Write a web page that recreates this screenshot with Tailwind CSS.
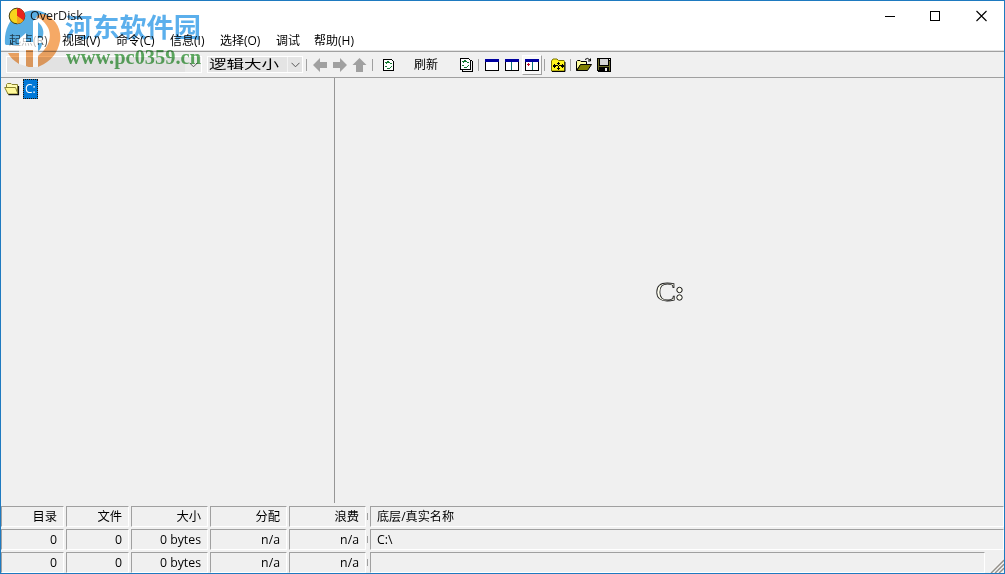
<!DOCTYPE html>
<html lang="zh-CN">
<head>
<meta charset="utf-8">
<title>OverDisk</title>
<script src="https://cdn.jsdelivr.net/npm/@tailwindcss/browser@4"></script>
</head>
<body class="w-[1005px] h-[574px] overflow-hidden">
<div class="relative flex flex-col w-[1005px] h-[574px] border border-[#1e7ac0] bg-[#f0f0f0] text-black text-[12px] leading-4 font-['Open_Sans','Noto_Sans_CJK_SC',sans-serif] whitespace-nowrap overflow-hidden">

  <!-- title bar -->
  <header class="flex h-[29px] shrink-0 bg-white items-center pl-[7px]">
    <svg class="relative z-10 w-[18px] h-[18px] shrink-0" viewBox="0 0 18 18"><circle cx="9" cy="9" r="7.8" fill="#f7d51c" stroke="#4a4010"/><path d="M9 9V1.2A7.8 7.8 0 0 1 15.4 13.5Z" fill="#e8231c"/><path d="M9 9L15.4 13.5A7.8 7.8 0 0 1 9 16.8Z" fill="#f5a51c"/></svg>
    <span class="ml-1 w-[60px] text-[12.5px] text-[#222]">OverDisk</span>
    <div class="ml-auto flex mr-[16px] gap-[34px] items-center">
      <svg class="w-[12px] h-[12px]" viewBox="0 0 12 12" shape-rendering="crispEdges"><path d="M1 6.5H11" stroke="#000"/></svg>
      <svg class="w-[12px] h-[12px]" viewBox="0 0 12 12" shape-rendering="crispEdges"><path d="M.5 1.5H9.5V10.5H.5Z" fill="none" stroke="#000"/></svg>
      <svg class="w-[12px] h-[12px]" viewBox="0 0 12 12"><path d="M.5 1L10.500 11M10.500 1L.5 11" stroke="#000" stroke-width="1.1"/></svg>
    </div>
  </header>

  <!-- menu -->
  <nav class="flex h-[21px] shrink-0 bg-white items-center pl-2 pt-px border-b border-[#e3e3e3]">
    <span class="w-[53px] text-[#555]">起点(R)</span><span class="w-[54px]">视图(V)</span><span class="w-[54px]">命令(C)</span><span class="w-[50px]">信息(I)</span><span class="w-[56px]">选择(O)</span><span class="w-[38px]">调试</span><span>帮助(H)</span>
  </nav>

  <!-- toolbar -->
  <div class="flex h-[27px] shrink-0 items-center border-y border-[#a0a0a0] pl-[5px]">
    <div class="flex h-[17px] w-[196px] bg-[#e2e2e2] border border-white justify-end items-center">
      <div class="h-full w-[16px] bg-[#eaeaea] flex items-center justify-center"><svg class="w-[9px] h-[6px]" viewBox="0 0 9 6"><path d="M.5 .8L4.5 4.8L8.5 .8" fill="none" stroke="#555"/></svg></div>
    </div>
    <div class="ml-[5px] flex h-[17px] w-[96px] bg-[#e4e4e4] border border-white items-center">
      <div class="w-[79px] pl-px"><span class="inline-block origin-left scale-x-[1.46]">逻辑大小</span></div>
      <div class="h-full w-[15px] bg-[#e4e4e4] border-l border-[#f3f3f3] flex items-center justify-center"><svg class="w-[9px] h-[6px]" viewBox="0 0 9 6"><path d="M.5 .8L4.5 4.8L8.5 .8" fill="none" stroke="#555"/></svg></div>
    </div>
    <i class="ml-[3px] h-[12px] w-px bg-[#a0a0a0]"></i>
    <svg class="ml-[6px] w-[54px] h-[14px] shrink-0" viewBox="0 0 54 14" fill="#a0a0a0"><path d="M0 7L7 0V4H14V10H7V14ZM34 7L27 0V4H20V10H27V14ZM46.500 0L53.500 7H50V14H43V7H39.500Z"/></svg>
    <i class="ml-[5px] h-[12px] w-px bg-[#a0a0a0]"></i>
    <svg class="ml-[10px] w-[11px] h-[12px] shrink-0" viewBox="0 0 11 12" shape-rendering="crispEdges"><path d="M.5 .5H8.500L10.500 2.500V11.500H.5Z" fill="#fff" stroke="#000"/><path d="M4 2h2v1h1v1h-3v1h-1v-1h-1v-1h2zM7 4h2v1h-2zM2 7h2v1h-2zM4 9h3v-1h1v-1h1v1h-1v1h-1v1h-3z" fill="#157a32"/></svg>
    <span class="ml-[20px] w-[25px]">刷新</span>
    <svg class="ml-[21px] w-[13px] h-[14px] shrink-0" viewBox="0 0 13 14" shape-rendering="crispEdges"><path d="M2.500 12V13.500H12.500V3.500L11 2" fill="none" stroke="#000"/><path d="M.5 .5H8.500L10.500 2.500V11.500H.5Z" fill="#fff" stroke="#000"/><path d="M4 2h2v1h1v1h-3v1h-1v-1h-1v-1h2zM7 4h2v1h-2zM2 7h2v1h-2zM4 9h3v-1h1v-1h1v1h-1v1h-1v1h-3z" fill="#157a32"/></svg>
    <i class="ml-[5px] h-[12px] w-px bg-[#a0a0a0]"></i>
    <svg class="ml-[6px] w-[14px] h-[12px] shrink-0" viewBox="0 0 14 12" shape-rendering="crispEdges"><path d="M.5 .5H13.500V11.500H.5Z" fill="#fff" stroke="#000"/><path d="M0 0H14V3H0Z" fill="#0000a0"/></svg>
    <svg class="ml-[6px] w-[14px] h-[12px] shrink-0" viewBox="0 0 14 12" shape-rendering="crispEdges"><path d="M.5 .5H13.500V11.500H.5Z" fill="#fff" stroke="#000"/><path d="M0 0H14V3H0Z" fill="#0000a0"/><path d="M6.500 3V11" stroke="#087070"/></svg>
    <div class="ml-[3px] w-[20px] h-[20px] border-r border-b border-[#a0a0a0] border-t border-t-white border-l border-l-white bg-[#f8f8f8] flex items-center justify-center">
      <svg class="w-[14px] h-[12px]" viewBox="0 0 14 12" shape-rendering="crispEdges"><path d="M.5 .5H13.500V11.500H.5Z" fill="#fff" stroke="#000"/><path d="M0 0H14V3H0Z" fill="#0000a0"/><path d="M7.500 3V11" stroke="#087070"/><path d="M2 5.500H5M3.500 4V7" stroke="#c01030"/></svg>
    </div>
    <i class="ml-[2px] h-[12px] w-px bg-[#a0a0a0]"></i>
    <svg class="ml-[6px] w-[15px] h-[14px] shrink-0" viewBox="0 0 15 14"><path d="M.5 3L2 1H6L7.500 2.500H13L13.500 3.500V13H.5Z" fill="#fff51c" stroke="#777100"/><path d="M14 4V13.500H1" fill="none" stroke="#000"/><path shape-rendering="crispEdges" d="M7 4h1v8h-1zM6 5h3v1h-3zM6 10h3v1h-3zM3 6h1v4h-1zM11 6h1v4h-1zM2 7h3v2h-3zM10 7h3v2h-3zM5 8h5v-1h-5z"/></svg>
    <i class="ml-[4px] h-[12px] w-px bg-[#a0a0a0]"></i>
    <svg class="ml-[5px] w-[17px] h-[15px] shrink-0" viewBox="0 0 17 15"><path d="M.5 13.500V4.500L1.500 3.500H4L5 4.500H10.500V7.500H5Z" fill="#ffffa0" stroke="#000"/><path d="M.8 13.500L4.500 7.500H15.500L11.500 13.500Z" fill="#808000" stroke="#000"/><path d="M9 2.500Q11.500 0 14 3M14.500 1.500V4H12" fill="none" stroke="#000"/></svg>
    <svg class="ml-[4px] w-[14px] h-[14px] shrink-0" viewBox="0 0 14 14" shape-rendering="crispEdges"><path d="M0 0H14V14H1L0 13Z"/><path d="M1 1H2V12H1ZM12 3H13V13H12ZM2 8H12V9H2Z" fill="#6b6b28"/><path d="M3 1H11V7H3Z" fill="#d5d5d5"/><path d="M8 10H10V13H8Z" fill="#e8e8e8"/><path d="M12 1H13V2H12Z" fill="#fff"/></svg>
  </div>

  <!-- tree and disk map -->
  <main class="flex h-[425px] shrink-0">
    <section class="w-[334px] border-r border-[#969696] pt-px pl-[3px]">
      <div class="flex items-center">
        <svg class="w-[17px] h-[14px]" viewBox="0 0 17 14"><path d="M2.500 6V2.500L3.500 1.500H7L8 2.500H13.500V12H4Z" fill="#fffcb0" stroke="#8a8430"/><path d="M.7 5.500H11.500L14 12H4Z" fill="#fff89a" stroke="#8a8430"/><path d="M14.500 4V12.700H4.500" fill="none" stroke="#111" stroke-width="1.200"/></svg>
        <span class="ml-[2px] w-[15px] h-[20px] bg-[#0078d7] border border-dotted border-[#241400] text-white pl-px leading-[18px]">C:</span>
      </div>
    </section>
    <section class="flex-1 flex items-center justify-center pt-[3px]">
      <svg class="w-[34px] h-[34px] overflow-visible" viewBox="0 0 34 34"><text x="2.500" y="25.500" font-family="Liberation Serif, serif" font-size="28" textLength="20.500" lengthAdjust="spacingAndGlyphs" fill="#fffff0" stroke="#222" stroke-width=".8">C</text><circle cx="26.500" cy="15" r="2.700" fill="#fffff4" stroke="#111"/><circle cx="26.500" cy="22.500" r="2.700" fill="#fffff4" stroke="#111"/></svg>
    </section>
  </main>

  <!-- status rows -->
  <footer class="flex flex-col gap-[2px] pt-[3px] h-[70px] shrink-0 text-[12.3px]">
    <div class="flex h-[21px] shrink-0 gap-[2px]">
      <div class="w-[63px] border border-[#a0a0a0] border-r-white border-b-white pr-[6px] text-right leading-5">目录</div>
      <div class="w-[63px] border border-[#a0a0a0] border-r-white border-b-white pr-[6px] text-right leading-5">文件</div>
      <div class="w-[77px] border border-[#a0a0a0] border-r-white border-b-white pr-[6px] text-right leading-5">大小</div>
      <div class="w-[77px] border border-[#a0a0a0] border-r-white border-b-white pr-[6px] text-right leading-5">分配</div>
      <div class="w-[77px] border border-[#a0a0a0] border-r-white border-b-white pr-[6px] text-right leading-5">浪费</div>
      <i class="w-px h-[7px] bg-[#a0a0a0] mt-[7px] -ml-px"></i>
      <div class="flex-1 border border-[#a0a0a0] border-r-white border-b-white pl-[6px] leading-5 text-[12.1px]">底层/真实名称</div>
    </div>
    <div class="flex h-[21px] shrink-0 gap-[2px]">
      <div class="w-[63px] border border-[#a0a0a0] border-r-white border-b-white pr-[6px] text-right leading-5">0</div>
      <div class="w-[63px] border border-[#a0a0a0] border-r-white border-b-white pr-[6px] text-right leading-5">0</div>
      <div class="w-[77px] border border-[#a0a0a0] border-r-white border-b-white pr-[6px] text-right leading-5">0 bytes</div>
      <div class="w-[77px] border border-[#a0a0a0] border-r-white border-b-white pr-[6px] text-right leading-5">n/a</div>
      <div class="w-[77px] border border-[#a0a0a0] border-r-white border-b-white pr-[6px] text-right leading-5">n/a</div>
      <i class="w-px h-[7px] bg-[#a0a0a0] mt-[7px] -ml-px"></i>
      <div class="flex-1 border border-[#a0a0a0] border-r-white border-b-white pl-[6px] leading-5">C:\</div>
    </div>
    <div class="flex h-[21px] shrink-0 gap-[2px]">
      <div class="w-[63px] border border-[#a0a0a0] border-r-white border-b-white pr-[6px] text-right leading-5">0</div>
      <div class="w-[63px] border border-[#a0a0a0] border-r-white border-b-white pr-[6px] text-right leading-5">0</div>
      <div class="w-[77px] border border-[#a0a0a0] border-r-white border-b-white pr-[6px] text-right leading-5">0 bytes</div>
      <div class="w-[77px] border border-[#a0a0a0] border-r-white border-b-white pr-[6px] text-right leading-5">n/a</div>
      <div class="w-[77px] border border-[#a0a0a0] border-r-white border-b-white pr-[6px] text-right leading-5">n/a</div>
      <i class="w-px h-[7px] bg-[#a0a0a0] mt-[7px] -ml-px"></i>
      <div class="flex-1 border border-[#a0a0a0] border-r-white border-b-white"></div>
      <svg class="ml-[2px] w-[15px] h-[21px] self-end" viewBox="0 0 15 21"><path d="M2 21L15 8M6 21L15 12M10 21L15 16" stroke="#96928b" stroke-width="1.600"/><path d="M.5 21L15 6.500M4.500 21L15 10.500M8.500 21L15 14.500" stroke="#fff" stroke-width=".7"/></svg>
    </div>
  </footer>

  <!-- watermark: white strokes fade the window, coloured parts multiply over it -->
  <svg class="absolute -left-px -top-px w-[68px] h-[72px] pointer-events-none" viewBox="0 0 68 72">
    <path d="M19 39L26 33V42H33V21L38 18V38H42V43H38V67H33V49H26V66L19 64V49H9V45H19Z" fill="#fff" opacity=".6"/>
  </svg>
  <svg class="absolute -left-px -top-px w-[210px] h-[72px] pointer-events-none mix-blend-multiply" viewBox="0 0 210 72">
    <g opacity=".85">
      <path d="M5 44C4 31 9 20 17 15C20 23 25 20 25 12C35 9 44 11 50 16C45 14 39 15 36 18L33 21V42H26V33L19 39V45H6Z" fill="#3da0df"/>
      <path d="M43 14C55 17 62 29 60 41C58 53 50 62 40 66V54C49 47 53 35 47 26C44 21 40 18 36 17C38 15 40 14 43 14Z" fill="#f49a4c"/>
      <path d="M8 53H19V64C14 61 10 57 8 53ZM26 50H33V67C30 67 27 67 26 66ZM40 54V66L38 67V56Z" fill="#f49a4c"/>
      <path d="M38 22C43 26 45 33 42 38H38ZM38 43H42C42 47 40 50 38 51Z" fill="#3da0df"/>
    </g>
    <text x="65" y="37" textLength="136" lengthAdjust="spacingAndGlyphs" font-family="Noto Sans CJK SC, sans-serif" font-weight="bold" font-size="26" fill="#329ce8" opacity=".8">河东软件园</text>
    <text x="66" y="64" textLength="135" lengthAdjust="spacingAndGlyphs" font-family="Liberation Serif, serif" font-weight="bold" font-size="20" fill="#43a047" opacity=".85">www.pc0359.cn</text>
  </svg>
</div>
</body>
</html>
